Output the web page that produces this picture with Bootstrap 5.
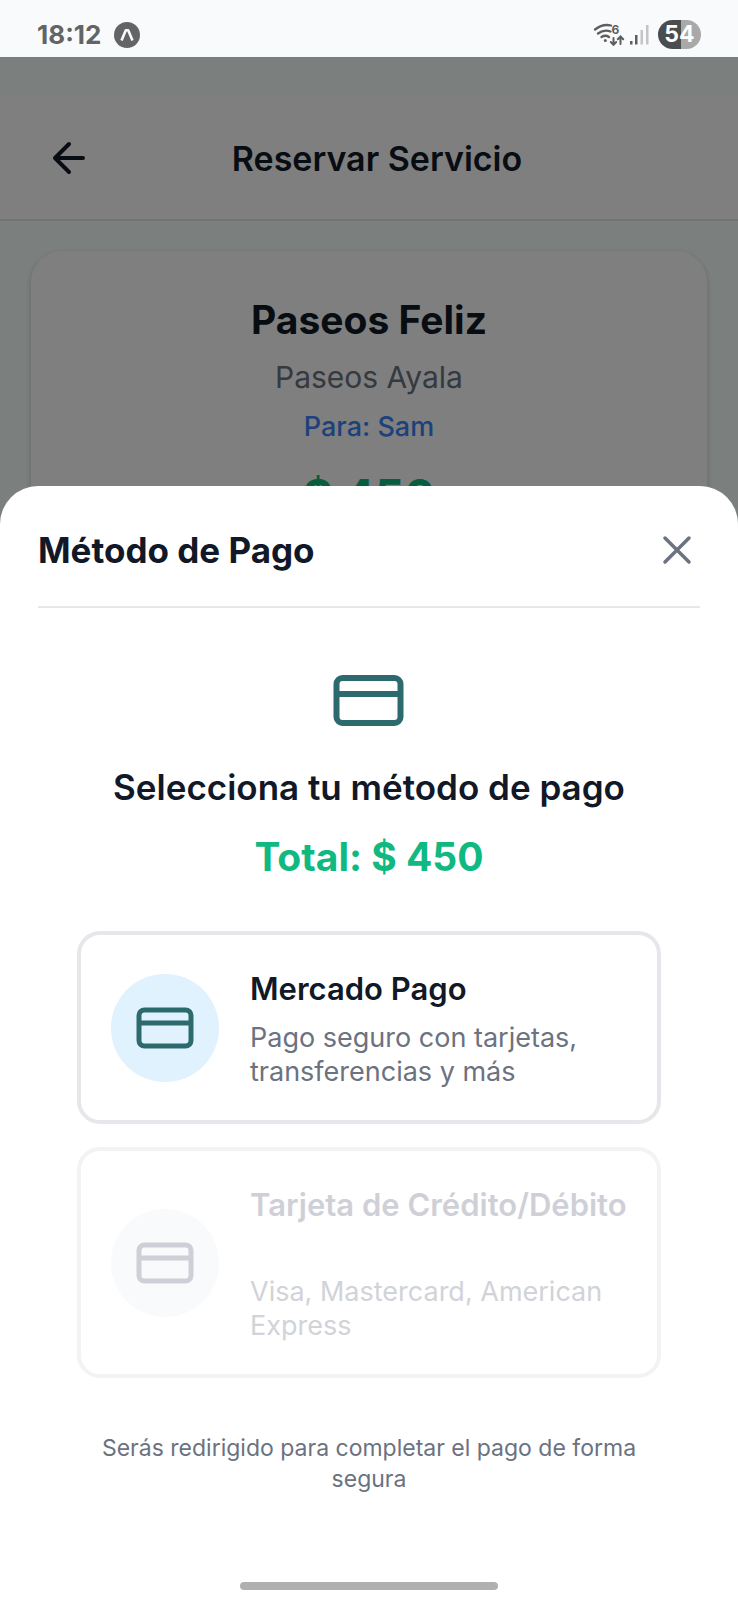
<!DOCTYPE html>
<html lang="es">
<head>
<meta charset="utf-8">
<meta name="viewport" content="width=device-width, initial-scale=1">
<title>Reservar Servicio</title>
<link rel="stylesheet" href="https://cdn.jsdelivr.net/npm/bootstrap@5.3.0/dist/css/bootstrap.min.css">
<style>
  body { font-family: Inter, Roboto, sans-serif; color: #111827; background: #f7fffc; }

  .status-bar { padding: 20px 37px 8px; background: #f9fafb; color: #636465; }
  .status-time { font-size: 26px; line-height: 29px; }
  .status-left { gap: 12px; }
  .battery { width: 43px; height: 29px; font-size: 23px; line-height: 29px; background: linear-gradient(90deg, #4b4c4d 53%, #a9a9aa 53%); }

  .app { background: #f7fffc; }
  .shade { background: rgba(0, 0, 0, .5); }
  .app-header { margin-top: 39px; padding: 41px 38px 38px; background: #fff; border-bottom: 2px solid #e5e7eb; }
  .app-header h1 { font-size: 34px; line-height: 44px; }
  .back-btn { width: 62px; }
  .header-end { width: 46px; }
  .service { margin: 30px 31px 0; padding: 46px 38px; border-radius: 31px; background: #fff; box-shadow: 0 2px 6px rgba(0, 0, 0, .2); }
  .service h2 { font-size: 39px; line-height: 46px; margin-bottom: 15px; }
  .provider { font-size: 30px; line-height: 38px; color: #6b7280; margin-bottom: 14px; }
  .pet { font-size: 27px; line-height: 34px; color: #3b82f6; margin-bottom: 24px; }
  .price { font-size: 46px; line-height: 56px; color: #10b981; }

  .sheet { border-radius: 38px 38px 0 0; background: #fff; }
  .sheet-head { margin: 0 38px; padding: 42px 0 34px; border-bottom: 2px solid #e5e7eb; }
  .sheet-head h2 { font-size: 35px; line-height: 44px; }
  .sheet-body { padding: 54px 77px 0; }
  .sheet-body h3 { font-size: 35px; line-height: 42px; margin: 36px 0 26px; }
  .total { font-size: 39px; line-height: 46px; color: #10b981; margin-bottom: 51px; }
  .teal { color: #2d6a6e; }

  .pay-list { gap: 23px; }
  .pay-option { padding: 31px 26px 31px 30px; border: 4px solid #e5e7eb; border-radius: 23px; background: #fff; color: #111827; }
  .pay-option:disabled { border-color: #f3f3f4; color: #cfd0d7; }
  .pay-icon { width: 108px; height: 108px; background: #e0f2fe; }
  .pay-option:disabled .pay-icon { background: #f9fafb; }
  .pay-text { padding: 4px 0 0 31px; }
  .pay-name { font-size: 31px; line-height: 38px; margin-bottom: 13px; }
  .pay-desc { font-size: 27px; line-height: 34px; color: #6b7280; }
  .pay-option:disabled .pay-desc { color: #d1d3d8; }
  .note { font-size: 23px; line-height: 31px; color: #6b7280; margin: 55px 0 87px; }
  .home-bar { width: 35%; height: 8px; background: #b0b0b0; margin-bottom: 10px; }
</style>
</head>
<body>
<div class="d-flex flex-column vh-100 overflow-hidden">
  <div class="status-bar d-flex align-items-center justify-content-between">
    <div class="status-left d-flex align-items-center">
      <span class="status-time fw-bold">18:12</span>
      <svg width="28" height="28" viewBox="0 0 28 28" aria-hidden="true"><circle cx="14" cy="14" r="13" fill="#636465"/><path d="M8.500 19.500 12.800 9.200h2.400L19.500 19.500" fill="none" stroke="#f9fafb" stroke-width="2.600" stroke-linejoin="round"/></svg>
    </div>
    <div class="d-flex align-items-center gap-2">
      <svg width="58" height="29" viewBox="0 0 58 29" aria-hidden="true">
        <g fill="none" stroke="#5d5e5f" stroke-width="2.300" stroke-linecap="round">
          <path d="M3 9.500Q10.500 3.500 19 5.500M6 13.500Q12 9 18.500 11.500M9.500 17Q13.300 14.500 17 17"/>
          <path d="M21.500 18v6.500M18.800 22l2.700 2.800 2.700-2.800M28.500 24v-7M25.800 19.300l2.700-2.800 2.700 2.800" stroke-width="2"/>
        </g>
        <circle cx="13.300" cy="20.500" r="1.500" fill="#5d5e5f"/>
        <text x="19.500" y="13.500" font-size="12" font-weight="700" fill="#5d5e5f">6</text>
        <path d="M38 21h2.500v3.500H38zM43 15h2.500v9.500H43z" fill="#5d5e5f"/>
        <path d="M48.500 10H51v14.500h-2.500zM54 5h2.500v19.500H54z" fill="#c4c5c6"/>
      </svg>
      <span class="battery rounded-pill text-white fw-bold text-center">54</span>
    </div>
  </div>

  <div class="app flex-grow-1 position-relative">
    <header class="app-header d-flex align-items-center">
      <button type="button" class="back-btn btn d-flex p-0 border-0" aria-label="Volver">
        <svg width="62" height="44" viewBox="0 0 62 44" fill="none" stroke="#111827" stroke-width="4" stroke-linecap="round" stroke-linejoin="round"><path d="M45 21H18M31 7 17 21l14 14"/></svg>
      </button>
      <h1 class="flex-grow-1 text-center fw-semibold mb-0">Reservar Servicio</h1>
      <span class="header-end"></span>
    </header>
    <section class="service text-center">
      <h2 class="fw-bold">Paseos Feliz</h2>
      <p class="provider">Paseos Ayala</p>
      <p class="pet fw-medium">Para: Sam</p>
      <p class="price fw-bold mb-0">$ 450</p>
    </section>
    <div class="shade position-absolute top-0 start-0 w-100 h-100"></div>
  </div>
</div>

<div class="sheet fixed-bottom" role="dialog" aria-labelledby="sheetTitle">
  <div class="sheet-head d-flex align-items-center justify-content-between">
    <h2 class="fw-bold mb-0" id="sheetTitle">Método de Pago</h2>
    <button type="button" class="btn p-0 border-0 d-flex" aria-label="Cerrar">
      <svg width="46" height="44" viewBox="0 0 46 44" fill="none" stroke="#6b7280" stroke-width="3.500" stroke-linecap="round"><path d="m11 10 24 24M35 10 11 34"/></svg>
    </button>
  </div>
  <div class="sheet-body d-flex flex-column">
    <svg class="teal align-self-center" width="72" height="68" viewBox="0 0 72 68" fill="none" stroke="currentColor" stroke-width="6"><rect x="3.500" y="16" width="64" height="45" rx="6"/><path d="M4 32h64"/></svg>
    <h3 class="text-center fw-semibold">Selecciona tu método de pago</h3>
    <p class="total text-center fw-bold">Total: $ 450</p>
    <div class="pay-list d-grid">
      <button type="button" class="pay-option d-flex align-items-center text-start">
        <span class="pay-icon rounded-circle flex-shrink-0 d-flex align-items-center justify-content-center">
          <svg class="teal" width="58" height="42" viewBox="0 0 58 42" fill="none" stroke="currentColor" stroke-width="5"><rect x="3" y="3" width="52" height="36" rx="5.500"/><path d="M3 16h52"/></svg>
        </span>
        <span class="pay-text flex-grow-1">
          <span class="pay-name d-block fw-semibold">Mercado Pago</span>
          <span class="pay-desc d-block">Pago seguro con tarjetas, transferencias y más</span>
        </span>
      </button>
      <button type="button" class="pay-option d-flex align-items-center text-start" disabled>
        <span class="pay-icon rounded-circle flex-shrink-0 d-flex align-items-center justify-content-center">
          <svg width="58" height="42" viewBox="0 0 58 42" fill="none" stroke="currentColor" stroke-width="5"><rect x="3" y="3" width="52" height="36" rx="5.500"/><path d="M3 16h52"/></svg>
        </span>
        <span class="pay-text flex-grow-1">
          <span class="pay-name d-block fw-semibold">Tarjeta de Crédito/Débito<br>&nbsp;</span>
          <span class="pay-desc d-block">Visa, Mastercard, American Express</span>
        </span>
      </button>
    </div>
    <p class="note text-center">Serás redirigido para completar el pago de forma segura</p>
  </div>
  <div class="home-bar rounded-pill mx-auto"></div>
</div>
<script src="https://cdn.jsdelivr.net/npm/bootstrap@5.3.0/dist/js/bootstrap.bundle.min.js"></script>
</body>
</html>
